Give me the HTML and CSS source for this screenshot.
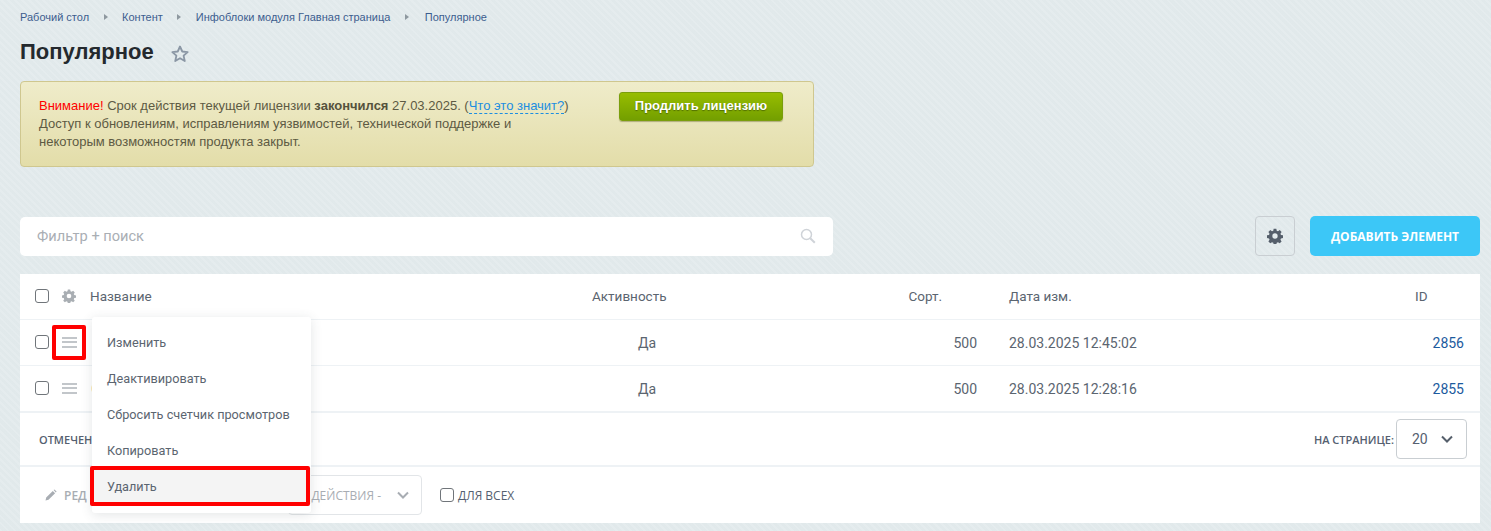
FILE: index.html
```html
<!DOCTYPE html>
<html lang="ru">
<head>
<meta charset="utf-8">
<title>Популярное</title>
<link rel="stylesheet" href="styles.css">
</head>
<body>
<main class="page">
  <nav class="crumbs">
    <a>Рабочий стол</a><i class="sep"></i><a>Контент</a><i class="sep"></i><a>Инфоблоки модуля Главная страница</a><i class="sep"></i><a>Популярное</a>
  </nav>
  <div class="title-row">
    <h1>Популярное</h1>
    <svg class="star" viewBox="0 0 24 24" width="20" height="20"><path d="M12 3l2.7 6 6.5.7-4.9 4.3 1.4 6.4-5.7-3.3-5.7 3.3 1.4-6.4-4.9-4.3 6.5-.7z" fill="none" stroke="#8b97a5" stroke-width="2.2" stroke-linejoin="round"/></svg>
  </div>
  <section class="alert">
    <p class="alert-text"><span class="red">Внимание!</span> Срок действия текущей лицензии <b>закончился</b> 27.03.2025. (<a class="dash">Что это значит?</a>)<br>Доступ к обновлениям, исправлениям уязвимостей, технической поддержке и<br>некоторым возможностям продукта закрыт.</p>
    <a class="renew">Продлить лицензию</a>
  </section>
  <div class="toolbar">
    <div class="search">
      <span>Фильтр + поиск</span>
      <svg viewBox="0 0 16 16" width="16" height="16"><circle cx="6.5" cy="6.5" r="5" fill="none" stroke="#cfd3d8" stroke-width="1.5"/><path d="M10.2 10.2l4.6 4.6" stroke="#cfd3d8" stroke-width="2"/></svg>
    </div>
    <button class="gear-btn"><svg class="gear" viewBox="0 0 24 24" width="16" height="16"><use href="#gear"/></svg></button>
    <button class="add">ДОБАВИТЬ ЭЛЕМЕНТ</button>
  </div>
  <section class="table">
    <div class="row head">
      <div class="tools"><i class="check"></i><svg class="gear light" viewBox="0 0 24 24" width="14" height="14"><use href="#gear"/></svg></div>
      <div>Название</div>
      <div>Активность</div>
      <div class="sort-h">Сорт.</div>
      <div class="date">Дата изм.</div>
      <div>ID</div>
    </div>
    <div class="row">
      <div class="tools"><i class="check"></i><i class="burger"></i></div>
      <div></div>
      <div class="yes">Да</div>
      <div class="num">500</div>
      <div class="date">28.03.2025 12:45:02</div>
      <div class="id"><a>2856</a></div>
    </div>
    <div class="row last">
      <div class="tools"><i class="check"></i><i class="burger"></i></div>
      <div><span class="name-edge">С</span></div>
      <div class="yes">Да</div>
      <div class="num">500</div>
      <div class="date">28.03.2025 12:28:16</div>
      <div class="id"><a>2855</a></div>
    </div>
    <div class="foot">
      <span class="caps">ОТМЕЧЕНО</span>
      <div class="per-page">
        <span class="caps">НА СТРАНИЦЕ:</span>
        <div class="select"><span>20</span><svg viewBox="0 0 12 8" width="12" height="8"><path d="M1 1.5l5 5 5-5" fill="none" stroke="#555f6b" stroke-width="2"/></svg></div>
      </div>
    </div>
    <div class="actions">
      <svg viewBox="0 0 12 12" width="12" height="12"><path d="M0.5 11.5l.7-3 6.6-6.6 2.3 2.3-6.6 6.6zM8.6 1.1l.8-.7 2.2 2.2-.8.8z" fill="#a8adb3"/></svg>
      <span class="edit">РЕД</span>
      <div class="action-select"><span>ДЕЙСТВИЯ -</span><svg viewBox="0 0 12 8" width="12" height="8"><path d="M1 1.5l5 5 5-5" fill="none" stroke="#a8adb3" stroke-width="2"/></svg></div>
      <i class="check"></i>
      <span class="all">ДЛЯ ВСЕХ</span>
    </div>
  </section>
</main>
<div class="menu">
  <a>Изменить</a>
  <a>Деактивировать</a>
  <a>Сбросить счетчик просмотров</a>
  <a>Копировать</a>
  <a class="hover">Удалить</a>
</div>
<div class="mark mark-burger"></div>
<div class="mark mark-delete"></div>
<svg class="defs" width="0" height="0"><defs><path id="gear" fill-rule="evenodd" d="M10 1h4l.6 3 1.9.8 2.6-1.7 2.8 2.8-1.7 2.6.8 1.9 3 .6v4l-3 .6-.8 1.9 1.7 2.6-2.8 2.8-2.6-1.7-1.9.8-.6 3h-4l-.6-3-1.9-.8-2.6 1.7-2.8-2.8 1.7-2.6-.8-1.9-3-.6v-4l3-.6.8-1.9-1.7-2.6 2.8-2.8 2.6 1.7 1.9-.8zM12 8a4 4 0 1 0 0 8 4 4 0 0 0 0-8z"/></defs></svg>
</body>
</html>
```

FILE: styles.css
```css
* { box-sizing: border-box; }
html, body { margin: 0; height: 531px; overflow: hidden; }
body { background: #e3ebed repeating-linear-gradient(45deg, rgba(255,255,255,.07) 0 2px, rgba(0,0,0,.006) 2px 5px); font-family: "Liberation Sans", Arial, sans-serif; color: #333; position: relative; }
.page { padding: 0 11px 0 20px; }
.crumbs { display: flex; align-items: center; height: 34px; font-size: 11px; padding-bottom: 1px; }
.crumbs a { color: #3c5d8e; }
.sep { width: 0; height: 0; margin: 0 14.5px; border-left: 4px solid #8e989f; border-top: 3.5px solid transparent; border-bottom: 3.5px solid transparent; }
.sep:last-of-type { margin-right: 16px; }
.title-row { display: flex; align-items: center; height: 36px; }
h1 { margin: 0; font-size: 22px; font-weight: 700; color: #24292e; line-height: 36px; }
.star { margin-left: 16px; margin-top: 3px; }
.alert { width: 794px; height: 86px; margin-top: 11px; display: flex; align-items: flex-start; border: 1px solid #cfc78f; border-radius: 4px; background: linear-gradient(#efecca, #e3dda9); padding: 10px 30px 0 18px; }
.alert-text { margin: 5px 0 0; flex: 1; font-size: 13px; line-height: 18px; color: #5d5a43; white-space: nowrap; }
.alert-text b { color: #55523c; }
.red { color: #f00; }
.dash { color: #1c8ee0; border-bottom: 1px dashed #1c8ee0; }
.renew { width: 164px; height: 29px; border-radius: 3px; background: linear-gradient(#97bd00, #739f00); border: 1px solid #7a9e0c; box-shadow: 0 1px 1px rgba(90,90,30,.4); color: #fff; font-size: 13px; font-weight: 700; line-height: 26px; text-align: center; text-shadow: 0 1px 1px rgba(50,70,0,.6); }
.toolbar { display: flex; align-items: center; margin-top: 49px; height: 40px; }
.search { width: 813px; height: 39px; background: #fff; border-radius: 5px; display: flex; align-items: center; justify-content: space-between; padding: 0 17px; font: 14.6px Roboto, sans-serif; color: #a9aeb4; }
.gear-btn { margin-left: 422px; width: 40px; height: 40px; border: 1px solid #c9ced2; border-radius: 4px; background: transparent; padding: 0; display: flex; align-items: center; justify-content: center; }
.gear { fill: #555f6b; display: block; }
.gear.light { fill: #a9aeb3; }
.add { margin-left: 15px; width: 170px; height: 40px; border: 0; border-radius: 5px; background: #3cc7f7; color: #fff; font: 700 12px "Open Sans", sans-serif; }
.table { margin-top: 18px; width: 1460px; height: 249px; background: #fff; font: 14px Roboto, sans-serif; color: #5b6570; }
.row { display: grid; grid-template-columns: 70px 502px 213px 172px 438px 1fr; height: 46px; align-items: center; border-bottom: 1px solid #eef2f5; }
.row.head { font-size: 13.5px; padding-bottom: 1px; }
.tools { display: flex; align-items: center; padding: 0 0 1px 15px; gap: 13px; }
.check { display: block; flex: none; width: 14px; height: 14px; border: 1px solid #70757a; border-radius: 3px; background: #fff; }
.burger { display: block; width: 15px; height: 11px; border-top: 2px solid #c2c6ca; border-bottom: 2px solid #c2c6ca; position: relative; }
.burger::after { content: ""; position: absolute; left: 0; right: 0; top: 2.5px; height: 2px; background: #c2c6ca; }
.sort-h { text-align: right; padding-right: 35px; }
.yes { padding-left: 46px; }
.num { text-align: right; }
.date { padding-left: 32px; }
.id { text-align: right; padding-right: 16px; color: #1c5a9e; }
.name-edge { display: inline-block; margin-left: 1px; color: #e8b48a; }
.foot { display: flex; align-items: center; justify-content: space-between; height: 56px; padding: 0 13px 0 19px; border-bottom: 2px solid #eef2f5; border-top: 2px solid #eef2f5; margin-top: -1px; }
.caps { font: 600 11px "Open Sans", sans-serif; color: #556070; }
.per-page { display: flex; align-items: center; gap: 2px; }
.select { width: 71px; height: 40px; border: 1px solid #c9ced2; border-radius: 4px; display: flex; align-items: center; justify-content: space-between; padding: 0 13px 0 15px; color: #556070; }
.actions { display: flex; align-items: center; height: 56px; padding-left: 25px; font: 600 12px "Open Sans", sans-serif; color: #a8adb3; }
.edit { margin-left: 7px; width: 224px; }
.action-select { width: 134px; height: 40px; border: 1px solid #e2e5e8; border-radius: 4px; display: flex; align-items: center; justify-content: flex-end; gap: 16px; padding: 0 12px 0 0; margin-right: 18px; white-space: nowrap; font-weight: 400; }
.all { margin-left: 4px; font: 500 12px "Open Sans", sans-serif; color: #556070; }
.menu { position: absolute; left: 92px; top: 317px; width: 219px; height: 196px; padding-top: 7px; background: #fff; border-radius: 3px; box-shadow: 0 2px 12px rgba(60,70,80,.14); font: 12.7px Roboto, sans-serif; color: #5b6570; }
.menu a { display: flex; align-items: center; height: 36px; padding-left: 15px; white-space: nowrap; }
.menu a.hover { background: #f4f4f4; }
.mark { position: absolute; border: 4px solid #f00; border-radius: 2px; }
.mark-burger { left: 52px; top: 325px; width: 34px; height: 35px; }
.mark-delete { left: 90px; top: 466px; width: 220px; height: 40px; }
.defs { position: absolute; }
```
